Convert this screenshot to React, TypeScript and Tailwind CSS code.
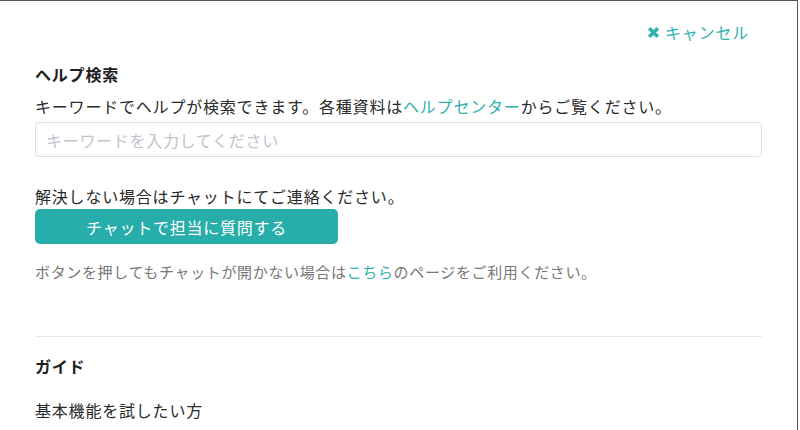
import React from 'react';

const font = { fontFamily: '"Noto Sans CJK JP", "Noto Sans", sans-serif' };

export default function App() {
  return (
    <div
      className="w-[798px] h-[430px] overflow-hidden bg-white border-t border-r border-[#555] text-[#2a2a2a] tracking-[0.8px]"
      style={font}
    >
      <div className="px-[35px] pt-[19px] flex flex-col">
        <div className="flex justify-end pr-[13px]">
          <button className="flex items-center gap-[5px] text-[16px] leading-[24px] text-[#2fb1ac] tracking-[0.8px]">
            <svg width="13" height="13" viewBox="0 0 12 12" className="mt-[1px]">
              <path d="M2 2 L10 10 M10 2 L2 10" stroke="#2fb1ac" strokeWidth="3.2" strokeLinecap="butt" />
            </svg>
            キャンセル
          </button>
        </div>

        <h2 className="mt-[18px] text-[16px] leading-[24px] font-bold text-[#1e1e1e]">ヘルプ検索</h2>
        <p className="mt-[8px] text-[16px] leading-[24px]">
          キーワードでヘルプが検索できます。各種資料は
          <a className="text-[#2fb1ac]">ヘルプセンター</a>
          からご覧ください。
        </p>
        <input
          className="mt-[4px] h-[35px] w-full rounded-[4px] border border-[#dcdfe6] px-[10px] text-[16px] tracking-[0.7px] placeholder:text-[#c0c4cc] outline-none"
          style={font}
          placeholder="キーワードを入力してください"
        />

        <p className="mt-[27px] text-[16px] leading-[24px]">解決しない場合はチャットにてご連絡ください。</p>
        <button className="mt-[1px] h-[35px] w-[303px] rounded-[5px] bg-[#27aeaa] text-white text-[16px] tracking-[0.75px]">
          チャットで担当に質問する
        </button>
        <p className="mt-[16px] text-[15px] leading-[24px] text-[#777] tracking-[0.65px]">
          ボタンを押してもチャットが開かない場合は
          <a className="text-[#2fb1ac]">こちら</a>
          のページをご利用ください。
        </p>

        <div className="mt-[52px] h-px bg-[#e6e6e6]" />

        <h2 className="mt-[17px] text-[16px] leading-[24px] font-bold text-[#1e1e1e]">ガイド</h2>
        <p className="mt-[20px] text-[16px] leading-[24px]">基本機能を試したい方</p>
      </div>
    </div>
  );
}
